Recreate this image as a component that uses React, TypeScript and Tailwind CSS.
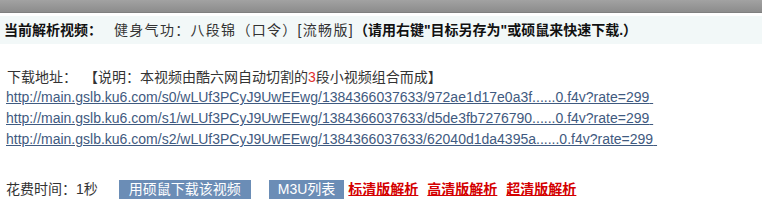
import React from "react";

const links = [
  "http://main.gslb.ku6.com/s0/wLUf3PCyJ9UwEEwg/1384366037633/972ae1d17e0a3f......0.f4v?rate=299",
  "http://main.gslb.ku6.com/s1/wLUf3PCyJ9UwEEwg/1384366037633/d5de3fb7276790......0.f4v?rate=299",
  "http://main.gslb.ku6.com/s2/wLUf3PCyJ9UwEEwg/1384366037633/62040d1da4395a......0.f4v?rate=299",
];

export default function App() {
  return (
    <div
      className="w-[762px] h-[214px] bg-white overflow-hidden text-[#222] text-[14px]"
      style={{ fontFamily: '"Liberation Sans", "Noto Sans CJK SC", sans-serif' }}
    >
      <div className="h-[13px] bg-gradient-to-b from-[#a2a2a2] to-[#8c8c8c] border-b border-[#7f7f7f]" />
      <div className="h-[3px] bg-white" />
      <div className="h-[28px] bg-[#f2f8f8] flex items-center pl-[4px] leading-none">
        <span className="font-bold text-[#111]">当前解析视频：</span>
        <span className="ml-[12px] text-[#333] tracking-[1.3px]">健身气功：八段锦（口令）[流畅版]</span>
        <span className="font-bold text-[#111]">（请用右键"目标另存为"或硕鼠来快速下载.）</span>
      </div>
      <div className="mt-[23px] pl-[7px] leading-[20px] text-[#333]">
        下载地址：<span className="ml-[14px]">【说明：本视频由酷六网自动切割的<span className="text-[#e0302c]">3</span>段小视频组合而成】</span>
      </div>
      <div className="flex flex-col items-start pl-[6px] text-[14px] leading-[21px]">
        {links.map((l) => (
          <a key={l} href="#" className="text-[#3f5a80] underline decoration-[#3f5a80]">
            {l}&nbsp;
          </a>
        ))}
      </div>
      <div className="mt-[29px] flex items-center pl-[6px] text-[#333]">
        <span className="text-[14px]">花费时间：1秒</span>
        <button className="ml-[21px] h-[19px] px-[10px] bg-[#6b8db6] text-white text-[14px] leading-[19px]">
          用硕鼠下载该视频
        </button>
        <button className="ml-[18px] h-[19px] px-[9px] bg-[#6b8db6] text-white text-[14px] leading-[19px]">
          M3U列表
        </button>
        <div className="ml-[4px] flex gap-[9px] text-[14px] font-bold text-[#d40000]">
          <a href="#" className="underline">标清版解析</a>
          <a href="#" className="underline">高清版解析</a>
          <a href="#" className="underline">超清版解析</a>
        </div>
      </div>
    </div>
  );
}
